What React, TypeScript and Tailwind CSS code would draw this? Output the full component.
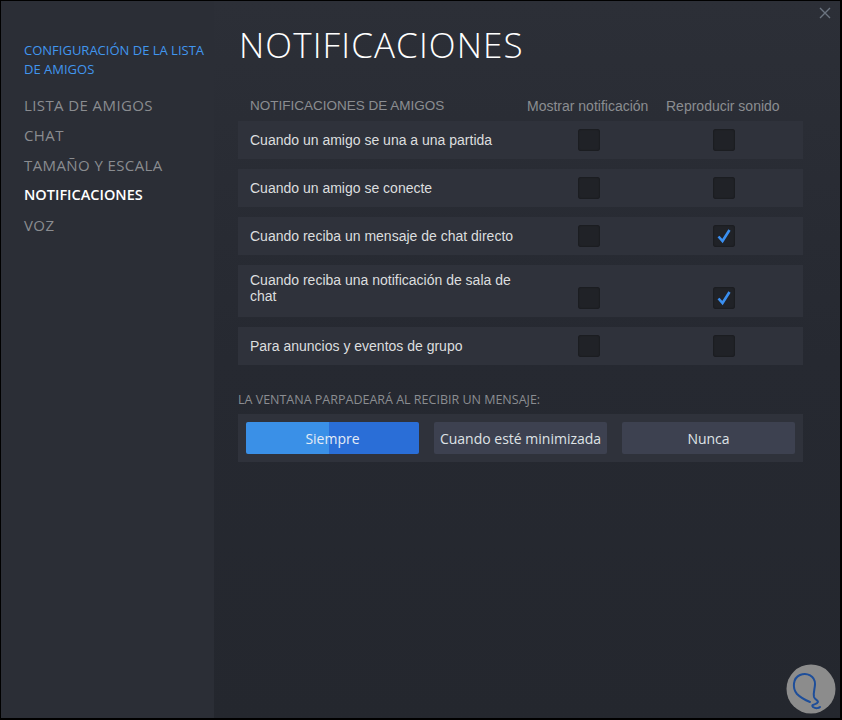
import { useState } from "react";

const rows = [
  { label: "Cuando un amigo se una a una partida", show: false, sound: false },
  { label: "Cuando un amigo se conecte", show: false, sound: false },
  { label: "Cuando reciba un mensaje de chat directo", show: false, sound: true },
  { label: "Cuando reciba una notificación de sala de chat", show: false, sound: true, tall: true },
  { label: "Para anuncios y eventos de grupo", show: false, sound: false },
];

const navItems = ["LISTA DE AMIGOS", "CHAT", "TAMAÑO Y ESCALA", "NOTIFICACIONES", "VOZ"];

function Check({ checked }: { checked: boolean }) {
  return (
    <div className="w-[22px] h-[22px] rounded-[3px] bg-[#202227] shadow-[inset_0_0_2px_rgba(0,0,0,0.5)] flex items-center justify-center">
      {checked && (
        <svg width="16" height="16" viewBox="0 0 16 16">
          <path d="M2.5 8.5 L6.5 13 L13.5 2" fill="none" stroke="#3a8ff0" strokeWidth="2.6" strokeLinejoin="miter" />
        </svg>
      )}
    </div>
  );
}

export default function App() {
  const [flash, setFlash] = useState("Siempre");

  return (
    <div className="w-[842px] h-[720px] bg-black pt-px pl-px pr-[2px] pb-[2px]" style={{ fontFamily: '"Open Sans", "Liberation Sans", sans-serif' }}>
      <div className="flex h-full">
        {/* Sidebar */}
        <aside className="w-[213px] shrink-0 bg-[#2b2e36] pl-[23px] pt-[40px]">
          <div className="text-[13px] leading-[19px] text-[#4196ef] uppercase">
            Configuración de la lista
            <br />
            de amigos
          </div>
          <nav className="mt-[11px] flex flex-col">
            {navItems.map((item) => (
              <div
                key={item}
                className={
                  item === "NOTIFICACIONES"
                    ? "h-[30px] flex items-center text-[14.5px] font-semibold text-white"
                    : "h-[30px] flex items-center text-[15px] tracking-[0.4px] text-[#8a8c90]"
                }
              >
                {item}
              </div>
            ))}
          </nav>
        </aside>

        {/* Main */}
        <main className="relative flex-1 bg-gradient-to-b from-[#2c2f37] via-[#262931] to-[#24272e] pl-[24px] pr-[37px]">
          <button className="absolute right-[8px] top-[5px] text-[#6b7480]">
            <svg width="14" height="14" viewBox="0 0 14 14">
              <path d="M2 2 L12 12 M12 2 L2 12" stroke="currentColor" strokeWidth="1.4" />
            </svg>
          </button>

          <h1 className="pt-[21px] pl-[1px] text-[35px] leading-[46px] font-light tracking-[1.1px] text-white">
            NOTIFICACIONES
          </h1>

          <div className="mt-[27px] flex items-center h-[22px] text-[14px] text-[#8b8d91]" style={{ fontFamily: '"Liberation Sans", Arial, sans-serif' }}>
            <div className="flex-1 pl-[12px] text-[13.5px]">NOTIFICACIONES DE AMIGOS</div>
            <div className="w-[139px]">Mostrar notificación</div>
            <div className="w-[137px]">Reproducir sonido</div>
          </div>

          <div className="mt-[4px] flex flex-col gap-[10px]" style={{ fontFamily: '"Liberation Sans", Arial, sans-serif' }}>
            {rows.map((r) => (
              <div key={r.label} className={`flex items-center bg-[#2f323b] pl-[12px] ${r.tall ? "h-[52px]" : "h-[38px]"}`}>
                <div className="flex-1">
                  <div className={`max-w-[272px] text-[14px] leading-[16px] text-[#dcdedf] ${r.tall ? "-mt-[6px]" : ""}`}>
                    {r.label}
                  </div>
                </div>
                <div className={`w-[135px] flex ${r.tall ? "pt-[14px]" : ""}`}>
                  <Check checked={r.show} />
                </div>
                <div className={`w-[90px] flex ${r.tall ? "pt-[14px]" : ""}`}>
                  <Check checked={r.sound} />
                </div>
              </div>
            ))}
          </div>

          <div className="mt-[27px] text-[12.5px] text-[#8b8d91] uppercase leading-[16px]">
            La ventana parpadeará al recibir un mensaje:
          </div>

          <div className="mt-[6px] bg-[#2f323b] px-[8px] py-[8px] flex gap-[15px]">
            {["Siempre", "Cuando esté minimizada", "Nunca"].map((opt) => (
              <button
                key={opt}
                onClick={() => setFlash(opt)}
                className={
                  flash === opt
                    ? "flex-1 h-[32px] rounded-[2px] bg-gradient-to-r from-[#3a90e7] from-[48%] to-[#2a6ed7] to-[48%] text-[14px] text-[#e4ecf6]"
                    : "flex-1 h-[32px] rounded-[2px] bg-[#3d4150] text-[14px] text-[#dfe3e6]"
                }
              >
                {opt}
              </button>
            ))}
          </div>

          {/* watermark */}
          <svg className="absolute right-[4px] bottom-[4px]" width="50" height="50" viewBox="0 0 50 50">
            <circle cx="25" cy="25" r="24.5" fill="#8c8c8c" />
            <path
              d="M24 38 C19 36 15 34 11 30 C6 24 7 14 14 11 C21 8 29 12 29 20 C29 25 27 28 28 33 C29 36 32 36 32 38 C31 41 24 40 27 43 C30 45 33 44 34 43"
              fill="none"
              stroke="#1e4e9a"
              strokeWidth="2"
              strokeLinecap="round"
            />
          </svg>
        </main>
      </div>
    </div>
  );
}
